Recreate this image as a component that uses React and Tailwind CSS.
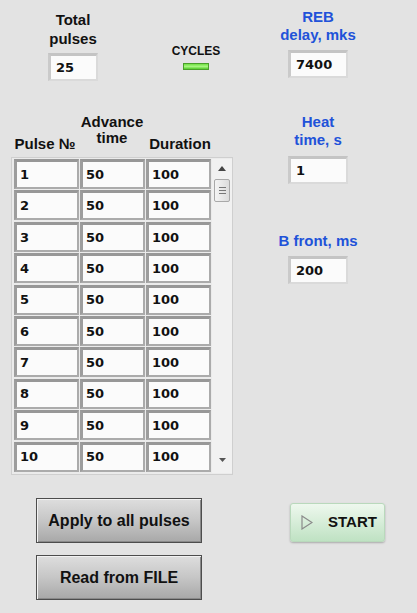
import React from 'react';

const rows = Array.from({ length: 10 }, (_, i) => ({ n: i + 1, adv: 50, dur: 100 }));

const label = "font-['Liberation_Sans',Arial,sans-serif] font-bold";
const num = "font-['DejaVu_Sans',Verdana,sans-serif] font-bold text-[13px] text-[#111]";

const NumBox = ({ value, w = 'w-[50px]' }) => (
  <div className={`${w} h-[28px] border-t-[3px] border-l-[3px] border-r-2 border-b-2 border-t-[#c4c4c4] border-l-[#cacaca] border-r-[#dadada] border-b-[#dadada] bg-[#fbfbfb] flex items-center pl-[5px] ${num}`}>
    {value}
  </div>
);

const Cell = ({ value }) => (
  <div className={`w-[65px] h-[30px] border-t-[3px] border-l-[3px] border-r-2 border-b-2 border-t-[#979797] border-l-[#9d9d9d] border-r-[#ababab] border-b-[#ababab] bg-[#fbfbfb] flex items-center pl-[3px] ${num}`}>
    {value}
  </div>
);

const GrayButton = ({ children }) => (
  <button className={`w-[166px] h-[45px] border border-[#4d4d4d] bg-gradient-to-b from-[#dedede] via-[#c6c6c6] to-[#a8a8a8] shadow-[inset_1px_1px_0_#f2f2f2,inset_-1px_-1px_0_#8a8a8a] text-[16px] text-[#111] ${label}`}>
    {children}
  </button>
);

export default function App() {
  return (
    <div className="w-[417px] h-[613px] bg-[#e3e3e3] flex overflow-hidden">
      {/* left side */}
      <div className="w-[240px] flex flex-col">
        <div className="flex mt-[10px]">
          <div className="ml-[43px] w-[60px] flex flex-col items-center">
            <div className={`text-[15px] leading-[19px] text-[#111] text-center ${label}`}>
              Total<br />pulses
            </div>
            <div className="mt-[5px]">
              <NumBox value="25" />
            </div>
          </div>
          <div className="ml-[69px] w-[48px] mt-[34px] flex flex-col items-center">
            <div className={`text-[12px] leading-[14px] text-[#111] ${label}`}>CYCLES</div>
            <div className="mt-[5px] w-[26px] h-[7px] border border-[#4a9e2a] bg-gradient-to-b from-[#6fe040] via-[#a6f57e] to-[#4fcc22]" />
          </div>
        </div>

        {/* table header */}
        <div className={`flex h-[38px] mt-[33px] ml-[12px] text-[15px] leading-[16px] text-[#111] ${label}`}>
          <div className="w-[66px] self-end text-center">Pulse №</div>
          <div className="w-[68px] self-start text-center">
            Advance<br />time
          </div>
          <div className="w-[68px] self-end text-center">Duration</div>
        </div>

        {/* table */}
        <div className="mt-[5px] ml-[11px] w-[222px] h-[318px] border border-[#cfcfcf] bg-[#ebebeb] flex pl-[2px] pt-[1px]">
          <div className="flex flex-col gap-[1.4px]">
            {rows.map((r) => (
              <div key={r.n} className="flex gap-[1px]">
                <Cell value={r.n} />
                <Cell value={r.adv} />
                <Cell value={r.dur} />
              </div>
            ))}
          </div>
          <div className="ml-[1px] w-[20px] h-[314px] bg-[#f1f1f1] flex flex-col items-center">
            <svg width="8" height="5" viewBox="0 0 8 5" className="mt-[7px]">
              <polygon points="4,0 8,5 0,5" fill="#444" />
            </svg>
            <div className="mt-[8px] w-[16px] h-[23px] border border-[#a9a9a9] rounded-[2px] bg-gradient-to-r from-[#f4f4f4] to-[#dcdcdc] flex flex-col items-center justify-center gap-[2px]">
              <div className="w-[7px] h-px bg-[#777]" />
              <div className="w-[7px] h-px bg-[#777]" />
              <div className="w-[7px] h-px bg-[#777]" />
            </div>
            <div className="flex-1" />
            <svg width="7" height="4" viewBox="0 0 7 4" className="mb-[11px]">
              <polygon points="0,0 7,0 3.5,4" fill="#555" />
            </svg>
          </div>
        </div>

        <div className="ml-[36px] mt-[23px] flex flex-col gap-[12px]">
          <GrayButton>Apply to all pulses</GrayButton>
          <GrayButton>Read from FILE</GrayButton>
        </div>
      </div>

      {/* right side */}
      <div className="ml-[18px] w-[120px] flex flex-col items-center">
        <div className={`mt-[8px] text-[15px] leading-[18px] text-[#2152d9] text-center whitespace-nowrap ${label}`}>
          REB<br />delay, mks
        </div>
        <div className="mt-[6px]">
          <NumBox value="7400" w="w-[60px]" />
        </div>

        <div className={`mt-[35px] text-[15px] leading-[18px] text-[#2152d9] text-center whitespace-nowrap ${label}`}>
          Heat<br />time, s
        </div>
        <div className="mt-[7px]">
          <NumBox value="1" w="w-[60px]" />
        </div>

        <div className={`mt-[48px] text-[15px] leading-[18px] text-[#2152d9] text-center whitespace-nowrap ${label}`}>
          B front, ms
        </div>
        <div className="mt-[6px]">
          <NumBox value="200" w="w-[60px]" />
        </div>

        <button className={`self-start ml-[32px] mt-[219px] w-[95px] h-[39px] rounded-[3px] border border-[#b9d9bc] bg-gradient-to-b from-[#eef8ee] to-[#bfe2c3] shadow-[0_1px_2px_rgba(0,0,0,0.25)] flex items-center pl-[10px] text-[15px] text-[#111] ${label}`}>
          <svg width="12" height="15" viewBox="0 0 12 15">
            <polygon points="1,1 11,7.5 1,14" fill="none" stroke="#8a8a8a" strokeWidth="1.2" />
          </svg>
          <span className="ml-[15px]">START</span>
        </button>
      </div>
    </div>
  );
}
